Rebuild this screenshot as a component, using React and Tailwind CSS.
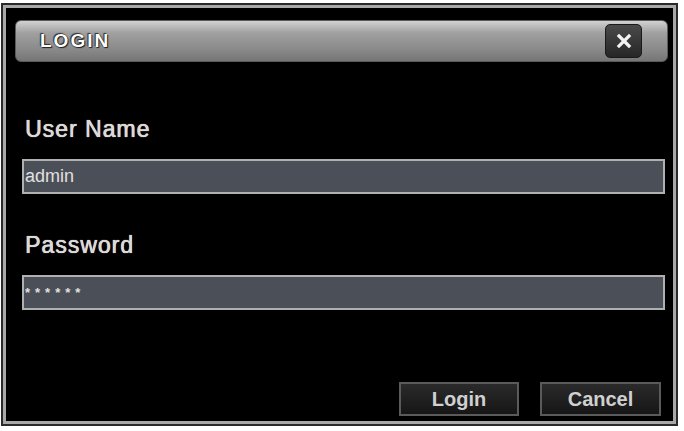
export default function App() {
  return (
    <div className="w-[684px] h-[431px] bg-white pt-[3px] pl-[1px] pr-[6px] pb-[5px] font-['Liberation_Sans',Arial,sans-serif]">
      <div className="h-full border-2 border-[#2a2a2a]">
        <div className="h-full border-[3px] border-[#a8a8a8] bg-black flex flex-col pt-[12px] pl-[16px] pr-[8px]">
          {/* title bar */}
          <div className="h-[42px] -ml-[7px] -mr-[3px] rounded-[6px] bg-[linear-gradient(#d2d2d2,#a0a0a0_30%,#8a8a8a_70%,#767676)] border border-[#5a5a5a] flex items-center justify-between pl-[24px] pr-[25px]">
            <span className="text-[19px] font-bold text-white tracking-[2px] [text-shadow:0_0_1px_#000,1px_1px_1px_#222,-1px_-1px_1px_#333]">
              LOGIN
            </span>
            <button className="w-[37px] h-[34px] rounded-[5px] bg-[linear-gradient(#4a4a4a,#262626)] border border-[#1a1a1a] flex items-center justify-center">
              <svg width="16" height="16" viewBox="0 0 16 16">
                <path d="M3 3 L13 13 M13 3 L3 13" stroke="#f2f2f2" strokeWidth="3.2" strokeLinecap="square" />
              </svg>
            </button>
          </div>

          <div className="mt-[55px] h-[24px] leading-[24px] text-[23px] tracking-[1px] text-[#dadada] pl-[3px] [text-shadow:0_0_1px_#dadada,0.4px_0_0_#dadada]">
            User Name
          </div>
          <div className="mt-[18px] h-[35px] bg-[#4b4f57] border-2 border-[#b0b0b0] flex items-center px-[1px] text-[18px] text-[#e0e0e0]">
            admin
          </div>

          <div className="mt-[39px] h-[24px] leading-[24px] text-[23px] tracking-[1px] text-[#dadada] pl-[3px] [text-shadow:0_0_1px_#dadada,0.4px_0_0_#dadada]">
            Password
          </div>
          <div className="mt-[18px] h-[35px] bg-[#4b4f57] border-2 border-[#b0b0b0] flex items-center px-[1px] text-[13px] font-bold tracking-[5px] text-[#e0e0e0]">
            ******
          </div>

          <div className="mt-[72px] flex justify-end gap-[21px] pr-[4px]">
            <button className="w-[120px] h-[34px] bg-[linear-gradient(#2a2a2a,#161616)] border-2 border-[#5a5a5a] text-[20px] font-bold text-[#d0d0d0]">
              Login
            </button>
            <button className="w-[121px] h-[34px] bg-[linear-gradient(#2a2a2a,#161616)] border-2 border-[#5a5a5a] text-[20px] font-bold text-[#d0d0d0]">
              Cancel
            </button>
          </div>
        </div>
      </div>
    </div>
  );
}
